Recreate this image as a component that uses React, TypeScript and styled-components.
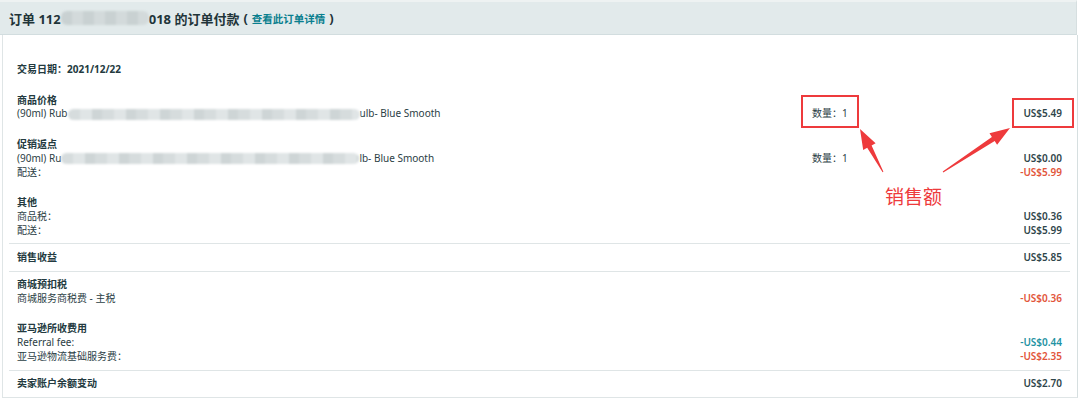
import React from 'react';
import styled, { createGlobalStyle } from 'styled-components';

const GlobalStyle = createGlobalStyle`
  html, body {
    margin: 0;
    padding: 0;
    background: #ffffff;
  }
  body {
    font-family: 'Noto Sans', 'Noto Sans CJK SC', sans-serif;
    color: #233a40;
  }
`;

type Line = {
  label: React.ReactNode;
  qty?: string;
  amount?: string;
  tone?: 'plain' | 'red' | 'teal';
};

type Block = {
  title: string;
  divider?: boolean;
  total?: string;
  lines: Line[];
};

const Blob = ({ w, h, dark }: { w: number; h: number; dark?: boolean }) => (
  <Smudge style={{ width: w, height: h }} $dark={dark} />
);

const blocks: Block[] = [
  {
    title: '商品价格',
    lines: [
      {
        label: (
          <>
            (90ml) Rub
            <Blob w={292} h={11} />
            ulb- Blue Smooth
          </>
        ),
        qty: '数量：1',
        amount: 'US$5.49',
      },
    ],
  },
  {
    title: '促销返点',
    lines: [
      {
        label: (
          <>
            (90ml) Ru
            <Blob w={298} h={11} />
            lb- Blue Smooth
          </>
        ),
        qty: '数量：1',
        amount: 'US$0.00',
      },
      { label: '配送：', amount: '-US$5.99', tone: 'red' },
    ],
  },
  {
    title: '其他',
    lines: [
      { label: '商品税：', amount: 'US$0.36' },
      { label: '配送：', amount: 'US$5.99' },
    ],
  },
  { title: '销售收益', divider: true, total: 'US$5.85', lines: [] },
  {
    title: '商城预扣税',
    divider: true,
    lines: [{ label: '商城服务商税费 - 主税', amount: '-US$0.36', tone: 'red' }],
  },
  {
    title: '亚马逊所收费用',
    lines: [
      { label: 'Referral fee:', amount: '-US$0.44', tone: 'teal' },
      { label: '亚马逊物流基础服务费：', amount: '-US$2.35', tone: 'red' },
    ],
  },
  { title: '卖家账户余额变动', divider: true, total: 'US$2.70', lines: [] },
];

const App = () => {
  return (
    <Page>
      <GlobalStyle />
      <Header>
        <Title>
          订单 112
          <Blob w={88} h={14} dark />
          018 的订单付款
        </Title>
        <Paren>(</Paren>
        <DetailLink href="#detail">查看此订单详情</DetailLink>
        <Paren>)</Paren>
      </Header>

      <Body>
        <DateRow>交易日期：2021/12/22</DateRow>

        {blocks.map((b) => (
          <Section key={b.title} $divider={b.divider}>
            <Row>
              <SectionTitle>{b.title}</SectionTitle>
              <span />
              <Amount>{b.total}</Amount>
            </Row>
            {b.lines.map((l, i) => (
              <Row key={i}>
                <Label>{l.label}</Label>
                <Qty>{l.qty}</Qty>
                <Amount $tone={l.tone}>{l.amount}</Amount>
              </Row>
            ))}
          </Section>
        ))}
      </Body>

      {/* red annotation marks drawn over the page */}
      <Markup width="1080" height="399" viewBox="0 0 1080 399">
        <rect x="802" y="96" width="56" height="31" fill="none" stroke="#ee3a3c" strokeWidth="2" />
        <rect x="1013" y="99" width="60" height="28" fill="none" stroke="#ee3a3c" strokeWidth="2" />
        <polygon
          points="860,129 875.6,143.3 871.6,145.4 883.4,171.8 882.6,172.2 867.2,147.8 863.2,149.9"
          fill="#ee3a3c"
        />
        <polygon
          points="1010,128 997.1,144.8 994.7,141.1 943.3,172.4 942.7,171.6 991.9,136.9 989.5,133.2"
          fill="#ee3a3c"
        />
      </Markup>
      <Callout>销售额</Callout>
    </Page>
  );
};

const Page = styled.div`
  position: relative;
  width: 1080px;
  height: 399px;
  overflow: hidden;
`;

const Header = styled.div`
  display: flex;
  align-items: center;
  width: 1077px;
  height: 35px;
  box-sizing: border-box;
  padding-left: 9px;
  border-top: 2px solid #eef2f2;
  border-bottom: 1px solid #d2dddf;
  border-right: 1px solid #d6dfe0;
  background: #e2eaeb;
`;

const Title = styled.span`
  display: inline-flex;
  align-items: center;
  font-size: 13px;
  font-weight: 700;
  color: #1f3439;
`;

const Smudge = styled.span<{ $dark?: boolean }>`
  display: inline-block;
  border-radius: 6px;
  filter: blur(1.2px);
  background: ${({ $dark }) =>
    $dark
      ? 'repeating-linear-gradient(90deg, #c9d1d2 0 11px, #d3dadb 11px 22px)'
      : 'repeating-linear-gradient(90deg, #d6dcdd 0 12px, #e0e5e6 12px 24px, #ced5d6 24px 34px)'};
  vertical-align: middle;
`;

const Paren = styled.span`
  font-size: 13px;
  font-weight: 700;
  color: #1f3439;
  margin: 0 4px;
`;

const DetailLink = styled.a`
  font-size: 10.5px;
  font-weight: 700;
  color: #0a7f8f;
  text-decoration: none;
`;

const Body = styled.div`
  margin-left: 2px;
  width: 1076px;
  box-sizing: border-box;
  padding: 28px 7px 6px 6px;
  border-left: 1px solid #dfe5e6;
  border-right: 1px solid #d6dfe0;
  border-bottom: 1px solid #dfe5e6;
  font-size: 10px;
  line-height: 13.7px;
`;

const DateRow = styled.div`
  padding: 0 8px;
  font-weight: 700;
`;

const Section = styled.div<{ $divider?: boolean }>`
  padding: ${({ $divider }) => ($divider ? '6.5px 8px 0' : '0 8px')};
  margin-top: ${({ $divider }) => ($divider ? '6px' : '17px')};
  border-top: ${({ $divider }) => ($divider ? '1px solid #dfe5e6' : 'none')};
`;

const Row = styled.div`
  display: grid;
  grid-template-columns: 1fr 120px 130px;
  align-items: center;
  white-space: nowrap;
`;

const SectionTitle = styled.span`
  font-weight: 700;
`;

const Label = styled.span`
  display: inline-flex;
  align-items: center;
  color: #2b4045;
`;

const Qty = styled.span`
  color: #2b4045;
`;

const Amount = styled.span<{ $tone?: 'plain' | 'red' | 'teal' }>`
  text-align: right;
  font-weight: 600;
  color: ${({ $tone }) =>
    $tone === 'red' ? '#e2553a' : $tone === 'teal' ? '#1f93a3' : '#2f454a'};
`;

const Markup = styled.svg`
  position: absolute;
  left: 0;
  top: 0;
  pointer-events: none;
`;

const Callout = styled.span`
  position: absolute;
  left: 885px;
  top: 183px;
  font-family: 'Noto Sans CJK SC', sans-serif;
  font-size: 19px;
  line-height: 26px;
  color: #ee3a3c;
`;

export default App;
